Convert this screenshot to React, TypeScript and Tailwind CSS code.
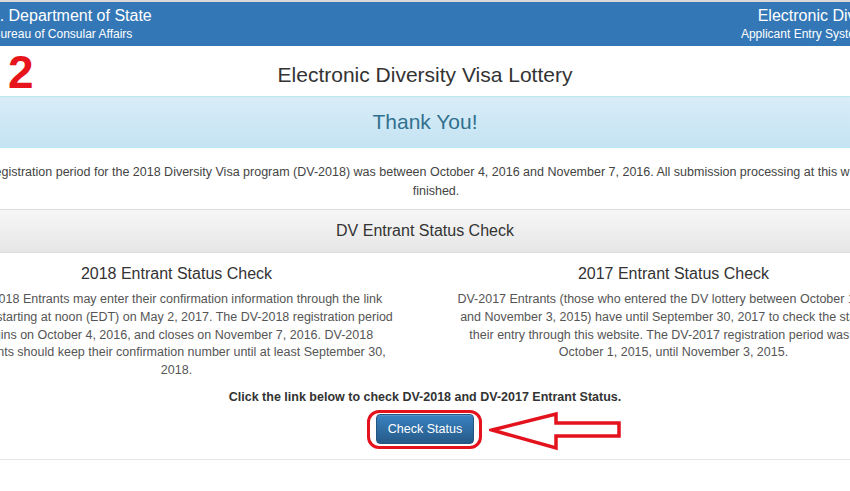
import React from "react";

const App = () => {
  return (
    <div className="w-[850px] h-[491px] overflow-hidden bg-white font-['Liberation_Sans',Arial,sans-serif]">
      {/* top site header */}
      <div className="h-[2px] bg-[#d9d9d9]" />
      <div className="h-[44px] bg-[#3477b6] flex justify-between text-white pt-[4px]">
        <div className="-ml-[27px] flex flex-col items-center">
          <span className="text-[16px] leading-[20px]">U.S. Department of State</span>
          <span className="text-[12px] leading-[16px]">Bureau of Consular Affairs</span>
        </div>
        <div className="-mr-[79px] flex flex-col items-end">
          <span className="text-[16px] leading-[20px]">Electronic Diversity Visa</span>
          <span className="text-[12px] leading-[16px] mr-[64px]">Applicant Entry System</span>
        </div>
      </div>

      <div className="w-[994px] -ml-[72px]">
        {/* page title */}
        <div className="relative h-[50px] flex items-center justify-center">
          <span className="absolute left-[80px] top-[3px] text-[46px] leading-none font-bold text-[#e8141c]">
            2
          </span>
          <h1 className="text-[21px] text-[#333] pt-[8px]">
            Electronic Diversity Visa Lottery
          </h1>
        </div>

        {/* thank you banner */}
        <div className="h-[52px] border-t border-b border-[#bce8f1] bg-gradient-to-b from-[#d9edf7] to-[#c4e3f3] flex items-center justify-center">
          <h2 className="text-[21px] text-[#31708f]">Thank You!</h2>
        </div>

        <p className="pl-[37px] pr-[15px] pt-[15px] pb-[8px] text-center text-[12.5px] leading-[19px] text-[#444]">
          The registration period for the 2018 Diversity Visa program (DV-2018) was between October 4, 2016 and
          November 7, 2016. All submission processing at this website has finished.
        </p>

        {/* status check panel */}
        <div className="border-b border-[#e5e5e5]">
          <div className="h-[44px] border-t border-b border-[#dcdcdc] bg-gradient-to-b from-[#f7f7f7] to-[#e6e6e6] flex items-center justify-center">
            <h3 className="text-[16px] text-[#333]">DV Entrant Status Check</h3>
          </div>

          <div className="grid grid-cols-2 pt-[10px]">
            <div className="px-[30px] text-center">
              <h4 className="text-[16px] leading-[22px] text-[#333] mb-[6px]">2018 Entrant Status Check</h4>
              <p className="text-[12.5px] leading-[17.8px] text-[#555]">
                DV-2018 Entrants may enter their confirmation information through the link below starting at noon
                (EDT) on May 2, 2017. The DV-2018 registration period begins on October 4, 2016, and closes on
                November 7, 2016. DV-2018 Entrants should keep their confirmation number until at least September 30,
                2018.
              </p>
            </div>
            <div className="px-[30px] text-center">
              <h4 className="text-[16px] leading-[22px] text-[#333] mb-[6px]">2017 Entrant Status Check</h4>
              <p className="text-[12.5px] leading-[17.8px] text-[#555]">
                DV-2017 Entrants (those who entered the DV lottery between October 1, 2015 and November 3, 2015) have
                until September 30, 2017 to check the status of their entry through this website. The DV-2017
                registration period was from October 1, 2015, until November 3, 2015.
              </p>
            </div>
          </div>

          <p className="mt-[8px] text-center text-[12.5px] leading-[18px] font-bold text-[#333]">
            Click the link below to check DV-2018 and DV-2017 Entrant Status.
          </p>

          <div className="flex justify-center pt-[8px] pb-[15px]">
            <div className="relative">
              <button className="h-[30px] w-[98px] rounded-[4px] border border-[#245580] bg-gradient-to-b from-[#3a83c2] to-[#265a88] text-white text-[12.5px] shadow-[inset_0_1px_0_rgba(255,255,255,0.15)]">
                Check Status
              </button>
              <span className="absolute -left-[9px] -right-[8px] -top-[4px] -bottom-[5px] rounded-[12px] border-[3px] border-[#e3121c]" />
              <svg
                className="absolute left-[113px] -top-[3px]"
                width="133"
                height="40"
                viewBox="0 0 133 40"
                fill="none"
              >
                <path
                  d="M3 19 L67 3 L67 12 L130 12 L130 25 L67 25 L67 37 Z"
                  stroke="#e3121c"
                  strokeWidth="3.5"
                  strokeLinejoin="miter"
                />
              </svg>
            </div>
          </div>
        </div>
      </div>
    </div>
  );
};

export default App;
